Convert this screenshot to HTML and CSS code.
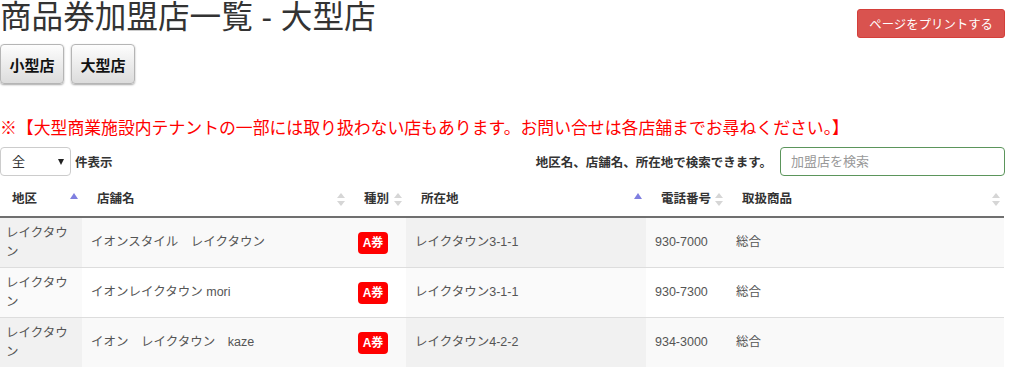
FILE: index.html
```html
<!DOCTYPE html>
<html lang="ja">

<head>
    <meta charset="UTF-8">
    <meta name="viewport" content="width=device-width, initial-scale=1.0">
    <title>商品券加盟店一覧 - 大型店</title>
    <link rel="stylesheet" href="styles.css">
</head>

<body>
    <div class="wrap">
        <div class="top">
            <h1 class="title">商品券加盟店一覧 - 大型店</h1>
            <button class="print">ページをプリントする</button>
        </div>
        <div class="kind">
            <button class="kind-btn">小型店</button>
            <button class="kind-btn">大型店</button>
        </div>
        <p class="notice">※【大型商業施設内テナントの一部には取り扱わない店もあります。お問い合せは各店舗までお尋ねください。】</p>

        <div class="controls">
            <div class="length">
                <span class="select">全</span>
                <b>件表示</b>
            </div>
            <div class="search">
                <b>地区名、店舗名、所在地で検索できます。</b>
                <input type="text" placeholder="加盟店を検索">
            </div>
        </div>

        <table class="list">
            <colgroup>
                <col style="width: 85px">
                <col style="width: 267px">
                <col style="width: 57px">
                <col style="width: 240px">
                <col style="width: 81px">
                <col style="width: 277px">
            </colgroup>
            <thead>
                <tr>
                    <th class="asc">地区</th>
                    <th class="both">店舗名</th>
                    <th class="both">種別</th>
                    <th class="asc">所在地</th>
                    <th class="both">電話番号</th>
                    <th class="both">取扱商品</th>
                </tr>
            </thead>
            <tbody>
                <tr>
                    <td class="sorted">レイクタウン</td>
                    <td>イオンスタイル　レイクタウン</td>
                    <td><span class="ken">A券</span></td>
                    <td class="sorted">レイクタウン3-1-1</td>
                    <td>930-7000</td>
                    <td>総合</td>
                </tr>
                <tr>
                    <td class="sorted">レイクタウン</td>
                    <td>イオンレイクタウン mori</td>
                    <td><span class="ken">A券</span></td>
                    <td class="sorted">レイクタウン3-1-1</td>
                    <td>930-7300</td>
                    <td>総合</td>
                </tr>
                <tr>
                    <td class="sorted">レイクタウン</td>
                    <td>イオン　レイクタウン　kaze</td>
                    <td><span class="ken">A券</span></td>
                    <td class="sorted">レイクタウン4-2-2</td>
                    <td>934-3000</td>
                    <td>総合</td>
                </tr>
            </tbody>
        </table>
    </div>
</body>

</html>
```

FILE: styles.css
```css
* {
    margin: 0;
    padding: 0;
    box-sizing: border-box;
}

body {
    font-family: "Liberation Sans", "Noto Sans CJK JP", sans-serif;
    color: #333;
    background: #fff;
}

button,
input {
    font-family: "Liberation Sans", "Noto Sans CJK JP", sans-serif;
    outline: none;
}

.wrap {
    width: 1005px;
}

/* 标题 + 打印按钮 */
.top {
    display: flex;
    justify-content: space-between;
    align-items: flex-start;
    height: 38px;
}

.title {
    font-size: 31.6px;
    font-weight: normal;
    line-height: 34px;
    color: #333;
}

.print {
    margin-top: 9px;
    height: 29px;
    padding: 0 11px;
    border: 1px solid #d43f3a;
    border-radius: 3px;
    background: #d9534f;
    color: #fff;
    font-size: 12.4px;
}

.kind {
    display: flex;
    gap: 7px;
    margin-top: 6px;
}

.kind-btn {
    width: 64px;
    height: 40px;
    border: 1px solid #b5b5b5;
    border-radius: 4px;
    background: linear-gradient(#fdfdfd, #dcdcdc);
    box-shadow: 0 1px 2px rgba(0, 0, 0, .35);
    font-size: 15px;
    font-weight: bold;
    color: #111;
}

.notice {
    margin-top: 33px;
    font-size: 16.85px;
    line-height: 24px;
    color: #f00;
    white-space: nowrap;
}

/* 件数 / 检索 */
.controls {
    display: flex;
    justify-content: space-between;
    align-items: center;
    margin-top: 6px;
    height: 29px;
    font-size: 12.5px;
}

.length,
.search {
    display: flex;
    align-items: center;
}

.select {
    position: relative;
    width: 71px;
    height: 29px;
    line-height: 27px;
    padding-left: 11px;
    border: 1px solid #ccc;
    border-radius: 4px;
    font-size: 13px;
    margin-right: 4px;
}

.select::after {
    content: "";
    position: absolute;
    right: 6px;
    top: 11px;
    border-left: 3.5px solid transparent;
    border-right: 3.5px solid transparent;
    border-top: 6px solid #222;
}

.search b {
    margin-right: 8px;
}

.search input {
    width: 225px;
    height: 29px;
    padding: 0 10px;
    border: 1px solid #5b955b;
    border-radius: 4px;
    font-size: 13px;
    color: #555;
}

.search input::placeholder {
    color: #999;
}

/* 表格 */
.list {
    width: 1007px;
    margin-left: -3px;
    margin-top: 5px;
    table-layout: fixed;
    border-collapse: collapse;
}

.list th {
    position: relative;
    text-align: left;
    padding: 9px 16px 8px 15px;
    font-size: 12.5px;
    line-height: 18px;
    color: #333;
    border-bottom: 2px solid #6f6f6f;
}

.list th.asc::after {
    content: "";
    position: absolute;
    right: 4px;
    top: 12px;
    border-left: 4px solid transparent;
    border-right: 4px solid transparent;
    border-bottom: 6px solid #7f7fe0;
}

.list th.both::before,
.list th.both::after {
    content: "";
    position: absolute;
    right: 4px;
    border-left: 4px solid transparent;
    border-right: 4px solid transparent;
}

.list th.both::before {
    top: 12px;
    border-bottom: 5px solid #d6d6d6;
}

.list th.both::after {
    top: 20px;
    border-top: 5px solid #d6d6d6;
}

.list td {
    padding: 6px 9px;
    font-size: 12.5px;
    line-height: 18.5px;
    color: #555;
    border-top: 1px solid #ddd;
    vertical-align: middle;
}

.list tbody tr:first-child td {
    border-top: 0;
}

.list tbody tr:nth-child(odd) td {
    background: #f9f9f9;
}

.list tbody tr:nth-child(odd) td.sorted {
    background: #f1f1f1;
}

.list tbody tr:nth-child(even) td.sorted {
    background: #fafafa;
}

.ken {
    display: inline-block;
    width: 30px;
    height: 22px;
    line-height: 22px;
    text-align: center;
    border-radius: 4px;
    background: #f00;
    color: #fff;
    font-weight: bold;
    font-size: 12px;
}
```
